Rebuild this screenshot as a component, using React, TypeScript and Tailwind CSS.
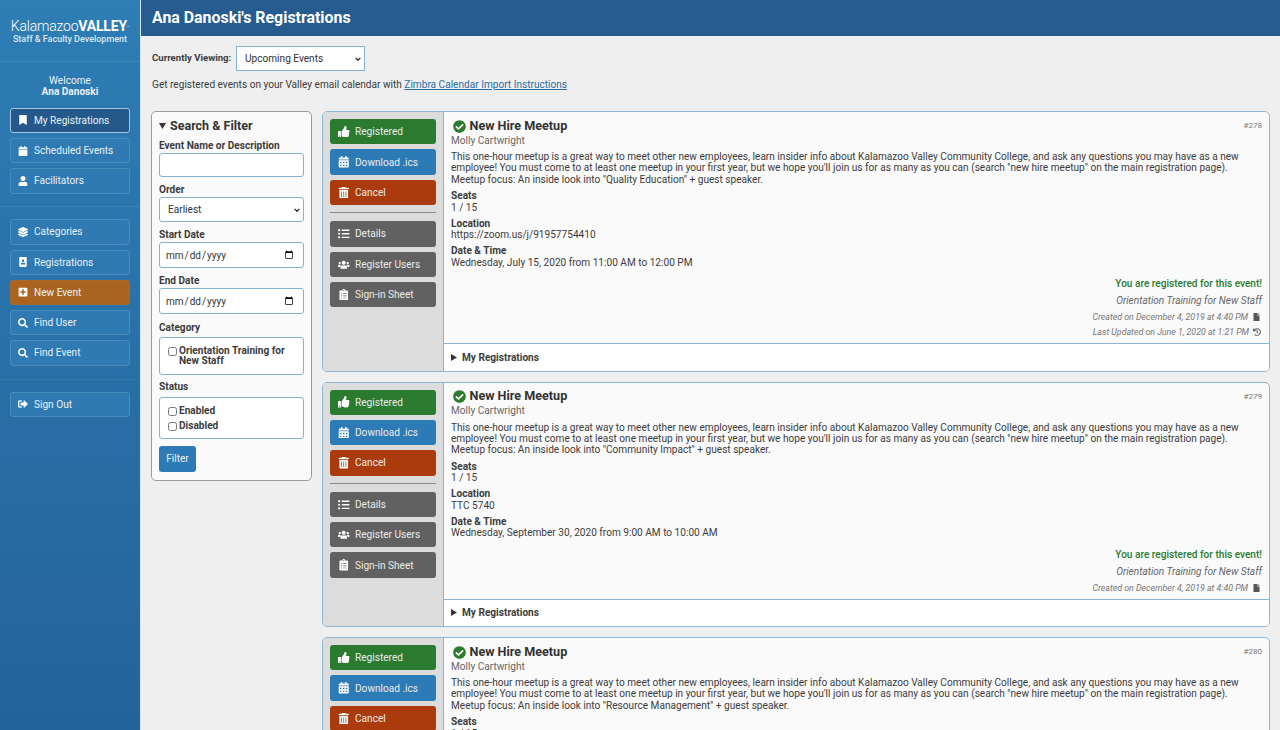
import React from "react";
import { FaBookmark, FaCalendarAlt, FaCalendar, FaUser, FaLayerGroup, FaPortrait, FaPlusSquare, FaSearch, FaSignOutAlt, FaThumbsUp, FaTrashAlt, FaListUl, FaUsers, FaClipboardList, FaCheckCircle, FaFile, FaHistory } from "react-icons/fa";

type IconT = React.ComponentType<{ className?: string }>;

function NavBtn({ icon: I, label, kind }: { icon: IconT; label: string; kind?: "active" | "orange" }) {
  const cls = kind === "active"
    ? "bg-[#25598c] border-[#a9c6de]"
    : kind === "orange"
    ? "bg-[#ab641f] border-[#a86a2c]"
    : "bg-[#2f7ab2] border-[#4a8dbd]";
  return (
    <div className={`h-[25.3px] flex items-center rounded-[3px] border pl-[7px] text-[10.1px] text-[#e9f1f7] ${cls}`}>
      <I className="w-[10px] h-[10px] mr-[6px] text-white" />
      <span>{label}</span>
    </div>
  );
}

function ActBtn({ icon: I, label, bg }: { icon: IconT; label: string; bg: string }) {
  return (
    <div className={`h-[25.4px] flex items-center rounded-[3px] pl-[8px] text-[10.1px] text-[#ebebeb] ${bg}`}>
      <span className="w-[12px] flex justify-center"><I className="w-[11.5px] h-[11.5px] text-white" /></span>
      <span className="ml-[5px]">{label}</span>
    </div>
  );
}

function Field({ label, gap = "mb-0", children }: { label: string; gap?: string; children: React.ReactNode }) {
  return (
    <div>
      <div className={`text-[10.1px] font-bold leading-[14px] text-[#3c3c3c] ${gap}`}>{label}</div>
      {children}
    </div>
  );
}

const inputCls = "block w-full bg-white border border-[#86b1d1] rounded-[3px] text-[10.1px] text-[#333]";

function Chevron({ right }: { right: string }) {
  return (
    <svg viewBox="0 0 10 6" className={`absolute top-1/2 -translate-y-1/2 w-[6px] h-[4px] pointer-events-none ${right}`}>
      <path d="M1 1l4 4 4-4" fill="none" stroke="#222" strokeWidth="2" />
    </svg>
  );
}

function Check({ label }: { label: string }) {
  return (
    <label className="flex items-start text-[10.1px] font-bold leading-[10px] text-[#3c3c3c]">
      <input type="checkbox" className="w-[9px] h-[9px] mt-[1px] mr-[2px] ml-[1px] shrink-0" />
      <span>{label}</span>
    </label>
  );
}

function Card({ id, focus, location, date, updated }: { id: string; focus: string; location: string; date: string; updated?: string }) {
  return (
    <div className="shrink-0 flex bg-[#fafafa] border border-[#8fb5d3] rounded-[5px] overflow-hidden">
      <div className="w-[121px] shrink-0 bg-[#dcdcdc] border-r border-[#8fb5d3] pl-[7px] pr-[7px] pt-[7px]">
        <div className="flex flex-col gap-[5px]">
          <ActBtn icon={FaThumbsUp} label="Registered" bg="bg-[#2a7a30]" />
          <ActBtn icon={FaCalendarAlt} label="Download .ics" bg="bg-[#2c7bb6]" />
          <ActBtn icon={FaTrashAlt} label="Cancel" bg="bg-[#ab3b0d]" />
        </div>
        <div className="border-t border-[#8a8a8a] mt-[7px] mb-[8px]" />
        <div className="flex flex-col gap-[5px]">
          <ActBtn icon={FaListUl} label="Details" bg="bg-[#616161]" />
          <ActBtn icon={FaUsers} label="Register Users" bg="bg-[#616161]" />
          <ActBtn icon={FaClipboardList} label="Sign-in Sheet" bg="bg-[#616161]" />
        </div>
      </div>
      <div className="flex-1 min-w-0 flex flex-col">
        <div className="relative flex-1 px-[7px] pt-[6.5px] pb-[5px]">
          <div className="absolute right-[7px] top-[8px] text-[8px] text-[#777]">{id}</div>
          <div className="flex items-center h-[15px]">
            <FaCheckCircle className="w-[13px] h-[13px] ml-[1.5px] mr-[4px] text-[#2a7a30]" />
            <span className="text-[12.6px] font-bold text-[#333]">New Hire Meetup</span>
          </div>
          <div className="text-[10.1px] leading-[12px] mt-[1px] text-[#666]">Molly Cartwright</div>
          <p className="text-[10.1px] leading-[11.4px] mt-[4.5px] text-[#3c3c3c]">
            This one-hour meetup is a great way to meet other new employees, learn insider info about Kalamazoo Valley Community College, and ask any questions you may have as a new employee! You must come to at least one meetup in your first year, but we hope you'll join us for as many as you can (search "new hire meetup" on the main registration page).<br />
            Meetup focus: An inside look into "{focus}" + guest speaker.
          </p>
          <div className="text-[10.1px] leading-[11.3px] mt-[5px] text-[#3c3c3c]"><b className="font-bold block">Seats</b>1 / 15</div>
          <div className="text-[10.1px] leading-[11.3px] mt-[5px] text-[#3c3c3c]"><b className="font-bold block">Location</b>{location}</div>
          <div className="text-[10.1px] leading-[11.3px] mt-[5px] text-[#3c3c3c]"><b className="font-bold block">Date &amp; Time</b>{date}</div>
          <div className="text-right mt-[10px]">
            <div className="text-[10.1px] font-medium leading-[12px] text-[#2a7a30]">You are registered for this event!</div>
            <div className="text-[10.1px] italic leading-[12px] mt-[5px] text-[#666]">Orientation Training for New Staff</div>
            <div className="flex justify-end items-center text-[8.8px] italic leading-[12px] mt-[4px] text-[#777]">
              Created on December 4, 2019 at 4:40 PM<FaFile className="w-[7px] h-[8px] ml-[5px] mr-[2px] text-[#555]" />
            </div>
            {updated && (
              <div className="flex justify-end items-center text-[8.8px] italic leading-[12px] mt-[3px] text-[#777]">
                {updated}<FaHistory className="w-[8px] h-[8px] ml-[4px] mr-[1px] text-[#555]" />
              </div>
            )}
          </div>
        </div>
        <div className="h-[27.5px] shrink-0 bg-white border-t border-[#8fb5d3] flex items-center pl-[7px] text-[10.1px] font-bold text-[#3c3c3c]">
          <svg viewBox="0 0 6 7" className="w-[6px] h-[7px] mr-[5px]"><polygon points="0,0 6,3.5 0,7" fill="#333" /></svg>
          My Registrations
        </div>
      </div>
    </div>
  );
}

export default function App() {
  return (
    <div className="h-[730px] w-[1280px] overflow-hidden flex bg-[#efefef] font-['Roboto',sans-serif]">
      <aside className="w-[141px] shrink-0 h-full bg-gradient-to-b from-[#2e7db5] to-[#24639a] flex flex-col border-r border-[#d8e6f0]">
        <div className="h-[62px] shrink-0 border-b border-[#3f86b8] pt-[19px] text-center">
          <div className="text-[14px] leading-[14px] tracking-[-0.2px] text-white font-light">Kalamazoo<span className="font-bold">VALLEY</span><sup className="text-[4px]">™</sup></div>
          <div className="text-[9px] leading-[11px] mt-[1px] font-medium text-[#dbe9f3]">Staff &amp; Faculty Development</div>
        </div>
        <div className="text-center text-[10.1px] leading-[11.4px] text-[#e9f1f7] pt-[13px]">
          <div>Welcome</div>
          <div className="font-bold">Ana Danoski</div>
        </div>
        <div className="flex flex-col gap-[5px] px-[10px] mt-[10px] pb-[12px] border-b border-[#3a80b2]">
          <NavBtn icon={FaBookmark} label="My Registrations" kind="active" />
          <NavBtn icon={FaCalendar} label="Scheduled Events" />
          <NavBtn icon={FaUser} label="Facilitators" />
        </div>
        <div className="flex flex-col gap-[5px] px-[10px] mt-[12.5px] pb-[13px] border-b border-[#3476a8]">
          <NavBtn icon={FaLayerGroup} label="Categories" />
          <NavBtn icon={FaPortrait} label="Registrations" />
          <NavBtn icon={FaPlusSquare} label="New Event" kind="orange" />
          <NavBtn icon={FaSearch} label="Find User" />
          <NavBtn icon={FaSearch} label="Find Event" />
        </div>
        <div className="px-[10px] mt-[12px]">
          <NavBtn icon={FaSignOutAlt} label="Sign Out" />
        </div>
      </aside>

      <main className="flex-1 min-w-0 flex flex-col">
        <header className="h-[36px] shrink-0 bg-[#265c90] flex items-center pl-[11px] text-[15.9px] font-bold text-white">
          Ana Danoski's Registrations
        </header>
        <div className="flex items-center pl-[11px] mt-[10px] h-[25px] text-[10.1px] text-[#3c3c3c]">
          <b className="w-[84px] text-[9.6px] font-bold shrink-0">Currently Viewing:</b>
          <div className="relative w-[129px]">
            <select className="appearance-none block w-full h-[25px] bg-white border border-[#86b1d1] pl-[8px] text-[10.1px] text-[#333]">
              <option>Upcoming Events</option>
            </select>
            <Chevron right="right-[4px]" />
          </div>
        </div>
        <div className="pl-[11px] mt-[7px] text-[10.1px] leading-[14px] text-[#3c3c3c]">
          Get registered events on your Valley email calendar with <a className="underline text-[#2b6ea5]">Zimbra Calendar Import Instructions</a>
        </div>
        <div className="flex items-start gap-[10px] pl-[10px] pr-[10px] mt-[19px]">
          <div className="w-[161px] shrink-0 bg-[#fafafa] border border-[#9a9a9a] rounded-[5px] px-[7px] pt-[7px] pb-[8px]">
            <div className="flex items-center text-[12.5px] font-bold text-[#333] h-[14px] mb-[6px]">
              <svg viewBox="0 0 7 6" className="w-[7px] h-[6px] mr-[4px]"><polygon points="0,0 7,0 3.5,6" fill="#333" /></svg>
              Search &amp; Filter
            </div>
            <div className="flex flex-col">
              <Field label="Event Name or Description"><input className={`${inputCls} h-[24px]`} /></Field>
              <div className="mt-[6px]">
                <Field label="Order">
                  <div className="relative">
                    <select className={`${inputCls} appearance-none h-[25px] pl-[8px]`}><option>Earliest</option></select>
                    <Chevron right="right-[4px]" />
                  </div>
                </Field>
              </div>
              <div className="mt-[6px]"><Field label="Start Date"><input type="date" className={`${inputCls} h-[26px] pl-[5px] pr-[7px] text-[10px]`} /></Field></div>
              <div className="mt-[6px]"><Field label="End Date"><input type="date" className={`${inputCls} h-[26px] pl-[5px] pr-[7px] text-[10px]`} /></Field></div>
              <div className="mt-[7px]">
                <Field label="Category" gap="mb-[2px]">
                  <div className="bg-white border border-[#86b1d1] rounded-[3px] h-[38px] pl-[7px] pr-[4px] pt-[8px]">
                    <Check label="Orientation Training for New Staff" />
                  </div>
                </Field>
              </div>
              <div className="mt-[5px]">
                <Field label="Status" gap="mb-[3px]">
                  <div className="bg-white border border-[#86b1d1] rounded-[3px] h-[42px] pl-[7px] pt-[8px] flex flex-col gap-[5px]">
                    <Check label="Enabled" />
                    <Check label="Disabled" />
                  </div>
                </Field>
              </div>
            </div>
            <div className="mt-[7px] w-[37px] h-[26px] rounded-[3px] bg-[#2c7bb6] flex items-center justify-center text-[10.1px] text-[#e9f1f7]">Filter</div>
          </div>
          <div className="flex-1 min-w-0 flex flex-col gap-[10px]">
            <Card id="#278" focus="Quality Education" location="https://zoom.us/j/91957754410" date="Wednesday, July 15, 2020 from 11:00 AM to 12:00 PM" updated="Last Updated on June 1, 2020 at 1:21 PM" />
            <Card id="#279" focus="Community Impact" location="TTC 5740" date="Wednesday, September 30, 2020 from 9:00 AM to 10:00 AM" />
            <Card id="#280" focus="Resource Management" location="TTC 5740" date="Wednesday, October 21, 2020 from 9:00 AM to 10:00 AM" />
          </div>
        </div>
      </main>
    </div>
  );
}
